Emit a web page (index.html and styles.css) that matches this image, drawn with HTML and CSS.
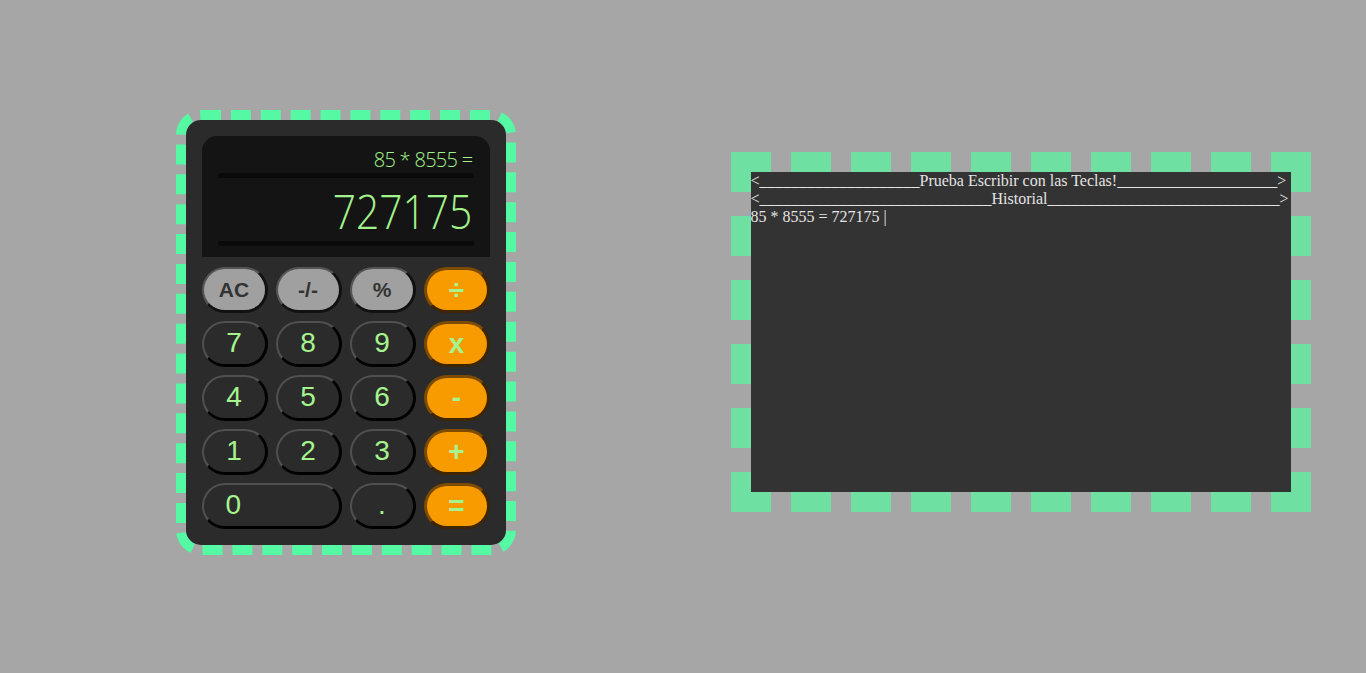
FILE: index.html
```html
<!DOCTYPE html>
<html lang="es">
<head>
<meta charset="utf-8">
<title>Calculadora</title>
<link rel="stylesheet" href="styles.css">
</head>
<body>
<main class="page">
  <section class="calc-frame">
    <div class="calc">
      <div class="screen">
        <div class="expr">85 * 8555 =</div>
        <div class="bar"></div>
        <div class="result"><span class="result-text">727175</span></div>
        <div class="bar bar-low"></div>
      </div>
      <div class="keys">
        <button class="key key-fn">AC</button>
        <button class="key key-fn">-/-</button>
        <button class="key key-fn">%</button>
        <button class="key key-op">÷</button>
        <button class="key">7</button>
        <button class="key">8</button>
        <button class="key">9</button>
        <button class="key key-op">x</button>
        <button class="key">4</button>
        <button class="key">5</button>
        <button class="key">6</button>
        <button class="key key-op">-</button>
        <button class="key">1</button>
        <button class="key">2</button>
        <button class="key">3</button>
        <button class="key key-op">+</button>
        <button class="key key-zero">0</button>
        <button class="key">.</button>
        <button class="key key-op">=</button>
      </div>
    </div>
  </section>
  <section class="panel-frame">
    <div class="panel">
      <div class="line">&lt;____________________Prueba Escribir con las Teclas!____________________&gt;</div>
      <div class="line">&lt;_____________________________Historial_____________________________&gt;</div>
      <div class="line">85 * 8555 = 727175 |</div>
    </div>
  </section>
</main>
</body>
</html>
```

FILE: styles.css
```css
html, body {
  background: #a6a6a6;
}
body {
  margin: 8px;
}
.page {
  display: grid;
  grid-template-columns: 1fr 1fr;
  height: 648px;
  align-items: center;
  justify-items: center;
}
.calc-frame {
  border: 10px dashed #55f9a3;
  border-radius: 25px;
}
.calc {
  width: 320px;
  height: 425px;
  box-sizing: border-box;
  background: #2b2b2b;
  border-radius: 15px;
  padding: 16px;
}
.screen {
  background: #141414;
  border-radius: 15px 15px 0 0;
  padding: 12px 16px 11px;
  height: 121px;
  box-sizing: border-box;
  font-family: "Open Sans", "Noto Sans", sans-serif;
  color: #a3f28c;
}
.expr {
  font-size: 20px;
  line-height: 24px;
  height: 24px;
  text-align: right;
  padding-right: 1px;
  font-weight: 300;
  letter-spacing: -0.7px;
}
.bar {
  height: 5px;
  background: #0a0a0a;
  border-radius: 3px;
  margin-top: 1px;
}
.bar-low {
  margin-top: 2px;
}
.result {
  margin-top: 5px;
  height: 56px;
  line-height: 56px;
  font-size: 48px;
  font-weight: 300;
  text-align: right;
  padding-right: 1px;
}
.result-text {
  display: inline-block;
  transform: scaleX(0.85);
  transform-origin: right center;
}
.keys {
  margin-top: 10px;
  display: grid;
  grid-template-columns: repeat(4, 66px);
  grid-auto-rows: 46px;
  gap: 8px;
}
.key {
  margin: 0;
  padding: 0;
  border-radius: 23px;
  border-style: solid;
  border-width: 2px 3px 3px 2px;
  border-color: #505050 #000 #000 #505050;
  background: #2b2b2b;
  color: #a6f48e;
  font-family: "Liberation Sans", Arial, sans-serif;
  font-size: 28px;
  line-height: 1;
  text-align: center;
}
.key-fn {
  background: #a0a0a0;
  color: #333;
  font-weight: bold;
  font-size: 21px;
  border-color: #555 #111 #111 #555;
}
.key-op {
  background: #f89b00;
  font-weight: bold;
  font-size: 28px;
  border-width: 3px;
  border-color: #7c4b00 #3d2600 #3d2600 #7c4b00;
}
.key-zero {
  grid-column: span 2;
  text-align: left;
  padding-left: 22px;
}
.panel-frame {
  border: 20px dashed #6ee0a2;
}
.panel {
  width: 540px;
  height: 320px;
  background: #333333;
  color: #e4e4e4;
  font-family: "Liberation Serif", "Times New Roman", serif;
  font-size: 16px;
  line-height: normal;
  white-space: nowrap;
  overflow: hidden;
}
```
